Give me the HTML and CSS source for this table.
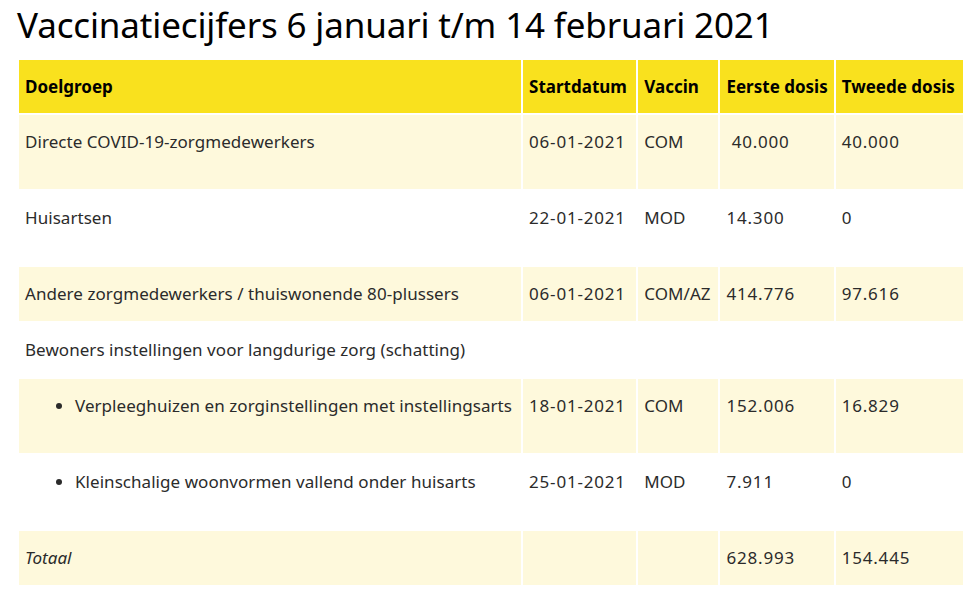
FILE: index.html
```html
<!DOCTYPE html>
<html lang="nl">
<head>
<meta charset="utf-8">
<title>Vaccinatiecijfers</title>
<link rel="stylesheet" href="styles.css">
</head>
<body>
<h1 class="title">Vaccinatiecijfers 6 januari t/m 14 februari 2021</h1>
<table class="vt">
  <colgroup>
    <col class="c1"><col class="c2"><col class="c3"><col class="c4"><col class="c5">
  </colgroup>
  <thead>
    <tr class="head">
      <th>Doelgroep</th><th>Startdatum</th><th>Vaccin</th><th>Eerste dosis</th><th>Tweede dosis</th>
    </tr>
  </thead>
  <tbody>
    <tr class="odd tall">
      <td>Directe COVID-19-zorgmedewerkers</td><td class="num">06-01-2021</td><td>COM</td><td class="num">&nbsp;40.000</td><td class="num">40.000</td>
    </tr>
    <tr class="even tall">
      <td>Huisartsen</td><td class="num">22-01-2021</td><td>MOD</td><td class="num">14.300</td><td class="num">0</td>
    </tr>
    <tr class="odd short">
      <td>Andere zorgmedewerkers / thuiswonende 80-plussers</td><td class="num">06-01-2021</td><td>COM/AZ</td><td class="num">414.776</td><td class="num">97.616</td>
    </tr>
    <tr class="even short">
      <td colspan="5">Bewoners instellingen voor langdurige zorg (schatting)</td>
    </tr>
    <tr class="odd tall">
      <td><ul class="bl"><li>Verpleeghuizen en zorginstellingen met instellingsarts</li></ul></td><td class="num">18-01-2021</td><td>COM</td><td class="num">152.006</td><td class="num">16.829</td>
    </tr>
    <tr class="even tall">
      <td><ul class="bl"><li>Kleinschalige woonvormen vallend onder huisarts</li></ul></td><td class="num">25-01-2021</td><td>MOD</td><td class="num">7.911</td><td class="num">0</td>
    </tr>
    <tr class="odd short">
      <td class="tot">Totaal</td><td></td><td></td><td class="num">628.993</td><td class="num">154.445</td>
    </tr>
  </tbody>
</table>
</body>
</html>
```

FILE: styles.css
```css
html, body {
  margin: 0;
  padding: 0;
  background: #ffffff;
}

body {
  font-family: "Noto Sans", "Open Sans", sans-serif;
  color: #2b2b2b;
}

.title {
  margin: 0;
  padding: 2px 0 0 17px;
  font-family: "Noto Sans", sans-serif;
  font-weight: 400;
  font-size: 35px;
  line-height: 46px;
  color: #000;
  letter-spacing: -0.15px;
}

.vt {
  margin: 10px 0 0 17px;
  border-collapse: separate;
  border-spacing: 2px;
  table-layout: fixed;
  width: 948px;
  font-size: 17px;
}

.c1 { width: 501px; }
.c2 { width: 113px; }
.c3 { width: 80px; }
.c4 { width: 113px; }
.c5 { width: 127px; }

.vt th, .vt td {
  text-align: left;
  padding: 0 6px;
  line-height: 24px;
  white-space: nowrap;
  overflow: visible;
}

.vt td {
  letter-spacing: 0.05px;
}

.vt td.num {
  letter-spacing: 0.8px;
}

.head th {
  background: #f9e11e;
  color: #000;
  font-weight: 700;
  height: 53px;
  vertical-align: middle;
  padding-top: 0;
  padding-bottom: 0;
}

.odd td { background: #fef9dc; }
.even td { background: #ffffff; }

.tall td {
  height: 74px;
  vertical-align: top;
  padding-top: 15px;
  padding-bottom: 0;
  box-sizing: border-box;
}

.short td {
  height: 54px;
  vertical-align: middle;
  box-sizing: border-box;
}

.bl {
  margin: 0;
  padding: 0 0 0 50px;
  list-style: disc;
}

.tot {
  font-style: italic;
}
```
